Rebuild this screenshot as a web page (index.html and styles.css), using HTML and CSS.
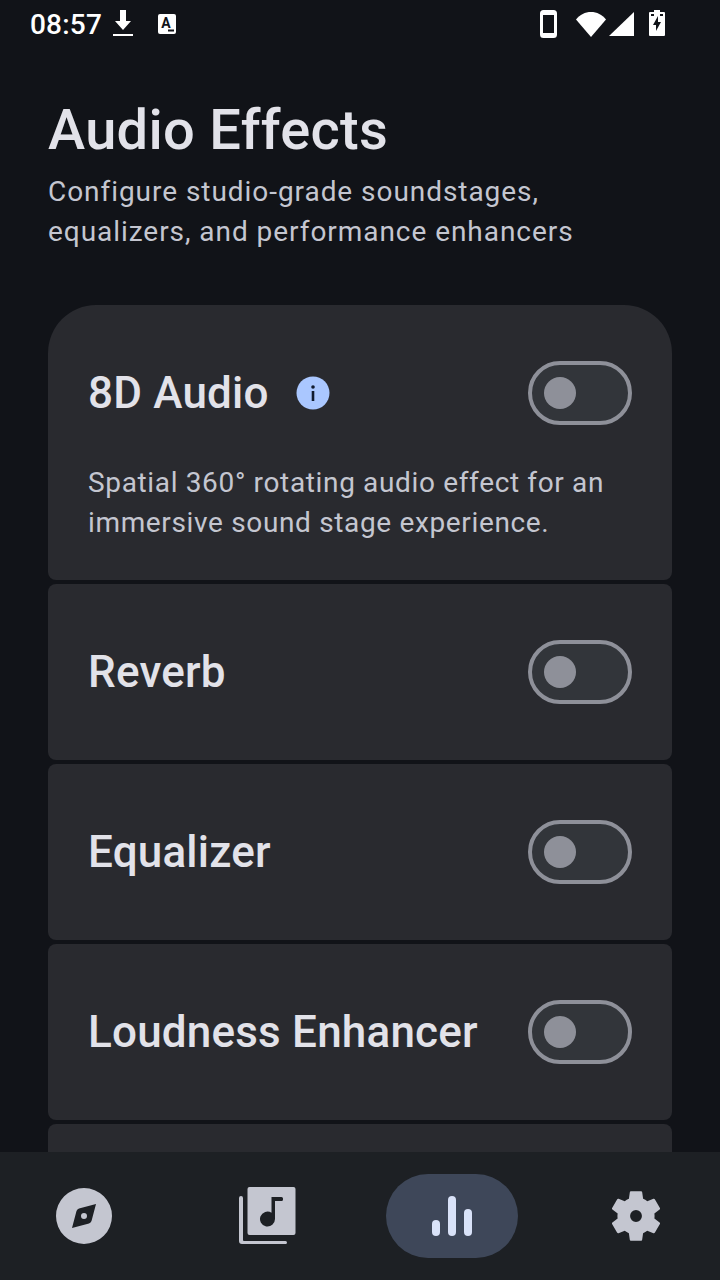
FILE: index.html
```html
<!DOCTYPE html>
<html>
  <head>
    <title>Audio Effects</title>
    <link rel="stylesheet" href="styles.css">
  </head>
  <body>
    <div class="status-bar">
      <span class="clock">08:57</span>
      <svg class="st-download" width="20" height="26" viewBox="0 0 20 26"><path fill="#fff" d="M7 0h6v11h5l-8 9-8-9h5z"/><rect y="24" width="20" height="2" fill="#fff"/></svg>
      <svg class="st-a" width="18" height="20" viewBox="0 0 18 20"><rect width="18" height="20" rx="2" fill="#fff"/><text x="8" y="14" class="st-a-letter">A</text><rect x="10" y="15.500" width="6" height="2" fill="#111318"/></svg>
      <span class="status-space"></span>
      <svg class="st-phone" width="17" height="28" viewBox="0 0 17 28"><rect x="1.500" y="1.500" width="14" height="25" rx="2" fill="none" stroke="#fff" stroke-width="3"/><rect x="1" y="1" width="15" height="4" fill="#fff"/><rect x="1" y="23" width="15" height="4" fill="#fff"/></svg>
      <svg class="st-wifi" width="30" height="25" viewBox="0 0 30 25"><path fill="#fff" d="M0 7.500C4 2.500 9 0 15 0s11 2.500 15 7.500L15 25z"/></svg>
      <svg class="st-signal" width="25" height="24" viewBox="0 0 25 24"><path fill="#fff" d="M25 0v24H0z"/></svg>
      <svg class="st-battery" width="16" height="26" viewBox="0 0 16 26"><path fill="#fff" d="M5 0h6v2h4a1 1 0 0 1 1 1v22a1 1 0 0 1-1 1H1a1 1 0 0 1-1-1V3a1 1 0 0 1 1-1h4z"/><path fill="#111318" d="M9 6 4 15h3v6l5-9H9zM2 4h3v2H2zM11 4h3v2h-3z"/></svg>
    </div>

    <main class="content">
      <h1>Audio Effects</h1>
      <p class="subtitle">Configure studio-grade soundstages,<br>equalizers, and performance enhancers</p>

      <div class="effects">
        <section class="card first">
          <div class="card-row">
            <h2>8D Audio</h2>
            <svg class="info" width="34" height="34" viewBox="0 0 34 34"><circle cx="17" cy="17" r="16.500" fill="#aac7ff"/><circle cx="17" cy="11" r="1.800" fill="#111b2e"/><rect x="15.700" y="15" width="2.600" height="10" fill="#111b2e"/></svg>
            <div class="switch"><div class="knob"></div></div>
          </div>
          <p class="desc">Spatial 360° rotating audio effect for an immersive sound stage experience.</p>
        </section>
        <section class="card">
          <div class="card-row">
            <h2>Reverb</h2>
            <div class="switch"><div class="knob"></div></div>
          </div>
        </section>
        <section class="card">
          <div class="card-row">
            <h2>Equalizer</h2>
            <div class="switch"><div class="knob"></div></div>
          </div>
        </section>
        <section class="card">
          <div class="card-row">
            <h2>Loudness Enhancer</h2>
            <div class="switch"><div class="knob"></div></div>
          </div>
        </section>
        <section class="card"></section>
      </div>
    </main>

    <nav class="bottom-nav">
      <div class="nav-item">
        <svg width="56" height="56" viewBox="0 0 56 56"><path fill="#c4c6d0" fill-rule="evenodd" d="M28 0a28 28 0 1 1 0 56 28 28 0 0 1 0-56zM40 16 23 20.500a4 4 0 0 0-2.500 2.500L16 40l17-4.500a4 4 0 0 0 2.500-2.500zM28 25a3 3 0 1 1 0 6 3 3 0 0 1 0-6z"/></svg>
      </div>
      <div class="nav-item">
        <svg width="58" height="58" viewBox="0 0 58 58"><path fill="#c4c6d0" fill-rule="evenodd" d="M10.500 0h44a2 2 0 0 1 2 2v44a2 2 0 0 1-2 2h-44a2 2 0 0 1-2-2V2a2 2 0 0 1 2-2zM32.500 10v15.700a7.500 7.500 0 1 0 3.500 6.300V14h6.500a1.500 1.500 0 0 0 1.500-1.500v-1a1.500 1.500 0 0 0-1.500-1.500z"/><path fill="#c4c6d0" d="M2 9a2 2 0 0 1 2 2v42a1 1 0 0 0 1 1h41.500a1.500 1.500 0 0 1 0 3H3a3 3 0 0 1-3-3V11a2 2 0 0 1 2-2z"/></svg>
      </div>
      <div class="nav-item active">
        <div class="bars">
          <span class="bar b1"></span>
          <span class="bar b2"></span>
          <span class="bar b3"></span>
        </div>
      </div>
      <div class="nav-item">
        <svg width="48" height="50" viewBox="2.700 2.300 18.600 19.400"><path fill="#c4c6d0" fill-rule="evenodd" d="M19.140 12.940c.04-.3.06-.61.06-.94 0-.32-.02-.64-.07-.94l2.030-1.580c.18-.14.23-.41.12-.61l-1.920-3.320c-.12-.22-.37-.29-.59-.22l-2.390.96c-.5-.38-1.030-.7-1.620-.94l-.36-2.540c-.04-.24-.24-.41-.48-.41h-3.840c-.24 0-.43.17-.47.41l-.36 2.540c-.59.24-1.130.57-1.620.94l-2.390-.96c-.22-.08-.47 0-.59.22L2.740 8.870c-.12.21-.08.47.12.61l2.030 1.580c-.05.3-.09.63-.09.94s.02.64.07.94l-2.030 1.580c-.18.14-.23.41-.12.61l1.920 3.320c.12.22.37.29.59.22l2.390-.96c.5.38 1.030.7 1.620.94l.36 2.540c.05.24.24.41.48.41h3.840c.24 0 .44-.17.47-.41l.36-2.540c.59-.24 1.130-.56 1.620-.94l2.390.96c.22.08.47 0 .59-.22l1.920-3.320c.12-.22.07-.47-.12-.61l-2.010-1.580zM12 14.300a2.300 2.300 0 1 1 0-4.600 2.300 2.300 0 0 1 0 4.600z"/></svg>
      </div>
    </nav>
  </body>
</html>
```

FILE: styles.css
```css
* {
  box-sizing: border-box;
}
html, body {
  margin: 0;
  height: 100%;
}
body {
  width: 720px;
  height: 1280px;
  display: flex;
  flex-direction: column;
  overflow: hidden;
  background-color: #111318;
  color: #e2e2e9;
  font-family: Roboto, "Noto Sans", sans-serif;
}

/* status bar */
.status-bar {
  height: 48px;
  flex-shrink: 0;
  display: flex;
  align-items: center;
  padding: 0 55px 0 30px;
  color: #fff;
}
.clock {
  font-size: 28px;
  font-weight: 500;
  letter-spacing: 0.2px;
  margin-right: 11px;
}
.st-download {
  margin-bottom: 2px;
}
.st-a {
  margin-left: 25px;
}
.st-a-letter {
  font-size: 14px;
  font-weight: 700;
  fill: #111318;
  text-anchor: middle;
}
.status-space {
  flex: 1;
}
.st-wifi {
  margin-left: 19px;
}
.st-signal {
  margin-left: 3px;
}
.st-battery {
  margin-left: 15px;
  margin-bottom: 3px;
}

/* page content */
.content {
  flex: 1;
  min-height: 0;
  overflow: hidden;
  padding: 48px 48px 0;
}
h1 {
  margin: 0;
  font-size: 56px;
  line-height: 68px;
  font-weight: 500;
  letter-spacing: 0.3px;
}
.subtitle {
  margin: 8px 0 0;
  font-size: 28px;
  line-height: 40px;
  color: #c4c6d0;
  letter-spacing: 0.95px;
}
.effects {
  margin-top: 53px;
  display: flex;
  flex-direction: column;
  gap: 4px;
}
.card {
  height: 176px;
  padding: 56px 40px 0;
  background-color: #292a2f;
  border-radius: 8px;
  flex-shrink: 0;
}
.card.first {
  height: 275px;
  border-radius: 48px 48px 8px 8px;
}
.card-row {
  display: flex;
  align-items: center;
  height: 64px;
}
h2 {
  margin: 0;
  font-size: 44px;
  font-weight: 500;
  letter-spacing: 0.2px;
}
.info {
  margin-left: 27px;
}
.switch {
  margin-left: auto;
  width: 104px;
  height: 64px;
  border: 4px solid #8e9099;
  border-radius: 32px;
  background-color: #32353a;
  display: flex;
  align-items: center;
  padding-left: 12px;
}
.knob {
  width: 32px;
  height: 32px;
  border-radius: 50%;
  background-color: #8e9099;
}
.desc {
  margin: 38px 0 0;
  font-size: 28px;
  line-height: 40px;
  color: #c4c6d0;
  letter-spacing: 0.65px;
}

/* bottom navigation */
.bottom-nav {
  height: 128px;
  flex-shrink: 0;
  background-color: #1d2024;
  display: grid;
  grid-template-columns: repeat(4, 168px);
  column-gap: 16px;
  align-items: center;
  justify-items: center;
}
.nav-item {
  display: flex;
  align-items: center;
  justify-content: center;
}
.nav-item.active {
  width: 132px;
  height: 84px;
  border-radius: 42px;
  background-color: #3e4759;
}
.bars {
  display: flex;
  align-items: flex-end;
  gap: 8px;
  height: 40px;
}
.bar {
  width: 8px;
  border-radius: 4px;
  background-color: #d9e2f8;
}
.b1 {
  height: 16px;
}
.b2 {
  height: 40px;
}
.b3 {
  height: 27px;
}
```
